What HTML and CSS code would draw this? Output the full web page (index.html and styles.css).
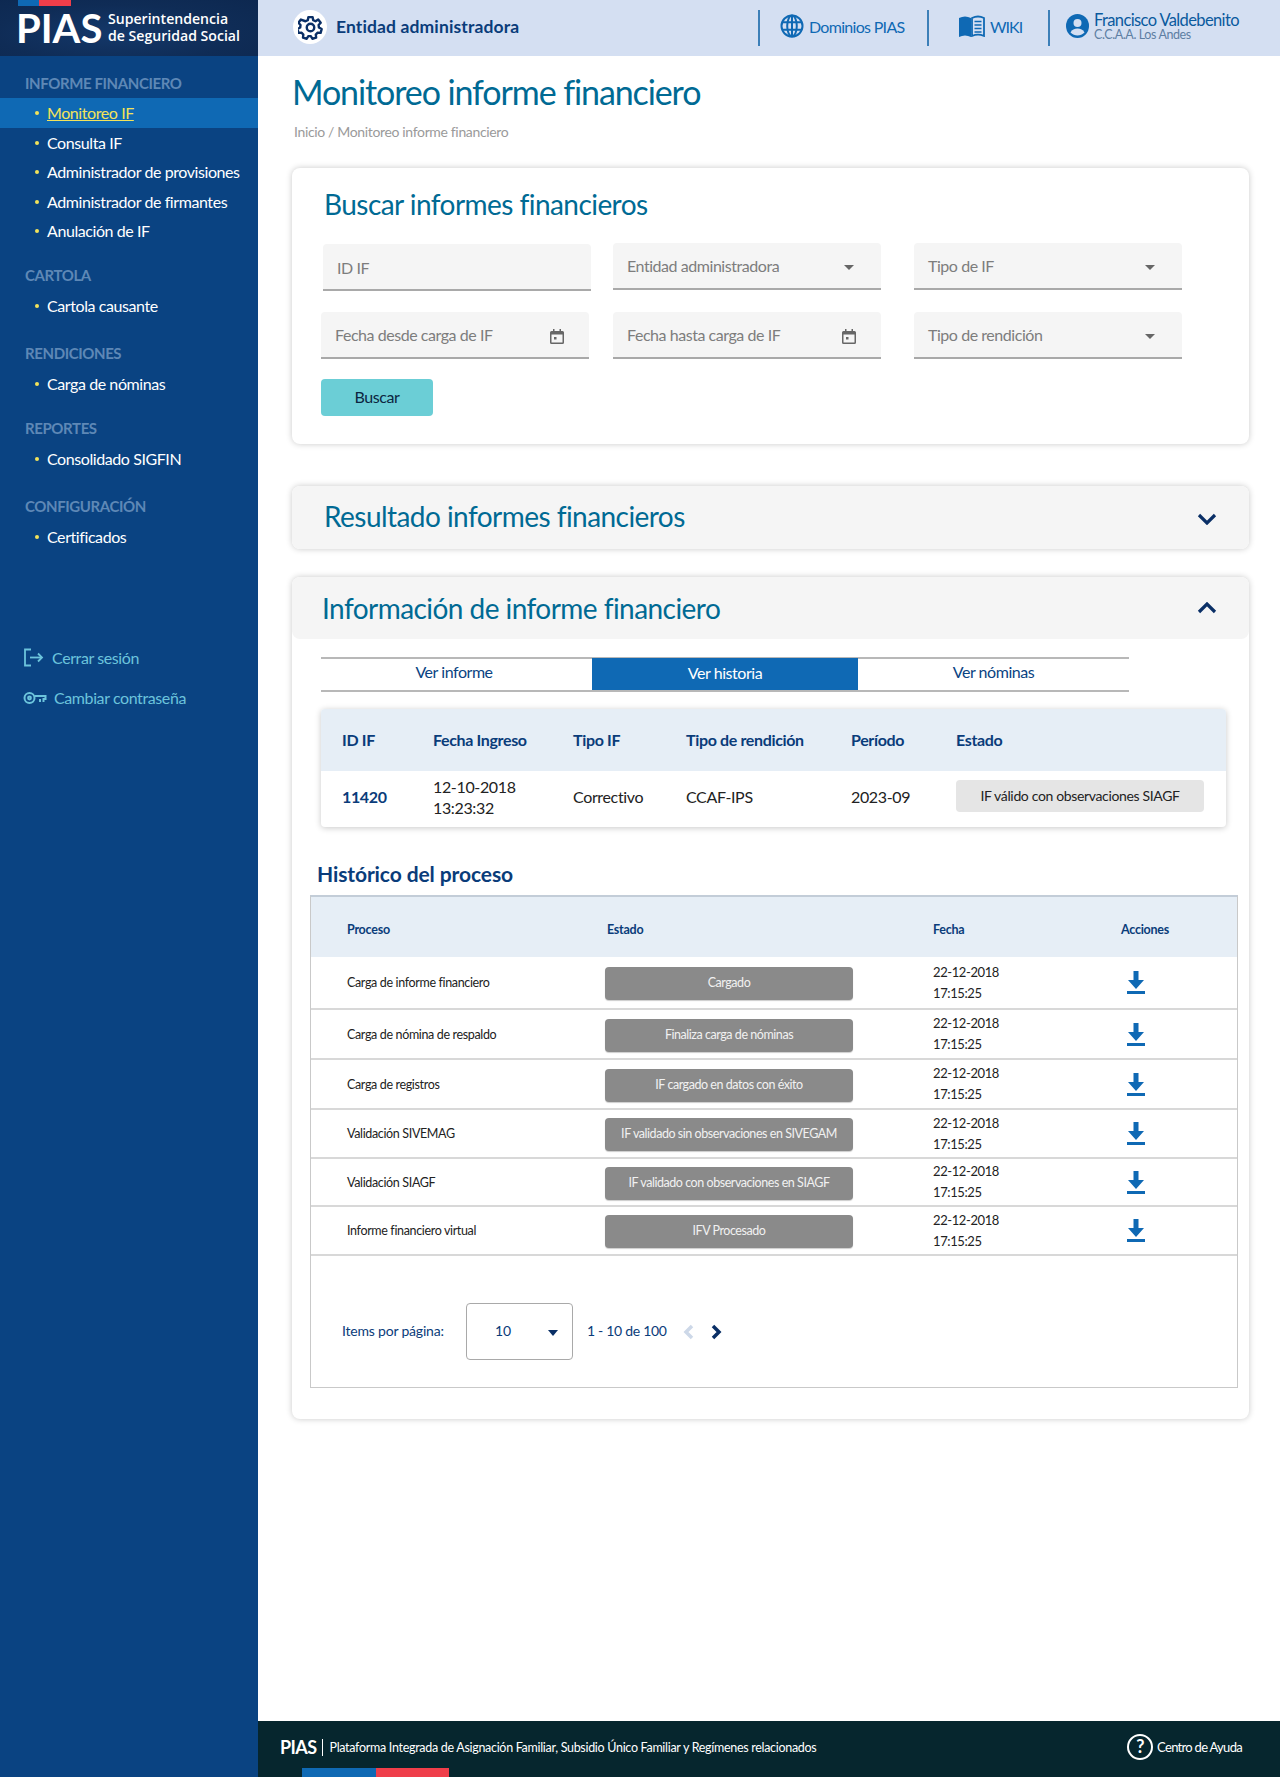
FILE: index.html
```html
<!DOCTYPE html>
<html lang="es">
<head>
    <meta charset="UTF-8">
    <title>Monitoreo informe financiero</title>
    <link rel="stylesheet" href="styles.css">
</head>
<body>
    <div class="app">
        <aside class="sidebar">
            <div class="brand">
                <div class="brand-flag"><span class="flag-blue"></span><span class="flag-red"></span></div>
                <div class="brand-row">
                    <span class="brand-name">PIAS</span>
                    <span class="brand-org">Superintendencia<br>de Seguridad Social</span>
                </div>
            </div>
            <nav class="menu">
                <h3 class="menu-title first">INFORME FINANCIERO</h3>
                <a class="menu-item active">Monitoreo IF</a>
                <a class="menu-item">Consulta IF</a>
                <a class="menu-item">Administrador de provisiones</a>
                <a class="menu-item">Administrador de firmantes</a>
                <a class="menu-item">Anulación de IF</a>
                <h3 class="menu-title tight">CARTOLA</h3>
                <a class="menu-item">Cartola causante</a>
                <h3 class="menu-title">RENDICIONES</h3>
                <a class="menu-item">Carga de nóminas</a>
                <h3 class="menu-title narrow">REPORTES</h3>
                <a class="menu-item">Consolidado SIGFIN</a>
                <h3 class="menu-title">CONFIGURACIÓN</h3>
                <a class="menu-item">Certificados</a>
            </nav>
            <div class="side-links">
                <a class="side-link">
                    <svg width="22" height="19" viewBox="0 0 22 19" fill="none" stroke="#6cc4dc" stroke-width="1.8"><path d="M8 1.500H2v16h6"/><path d="M7 9.500h12"/><path d="M15 5.500l4 4-4 4"/></svg>
                    Cerrar sesión
                </a>
                <a class="side-link">
                    <svg width="24" height="14" viewBox="0 0 24 14" fill="none" stroke="#6cc4dc" stroke-width="2"><circle cx="6.500" cy="7" r="5"/><circle cx="6.500" cy="7" r="1.400"/><path d="M11.500 5h11v3h-2v3M17 8v3"/></svg>
                    Cambiar contraseña
                </a>
            </div>
        </aside>

        <div class="main">
            <header class="topbar">
                <div class="entity">
                    <span class="entity-icon">
                        <svg width="25" height="25" viewBox="0 0 24 24" fill="none" stroke="#0a2f66" stroke-width="2.300"><path d="M10 2h4l.6 3 2.200 1 2.600-1.600 2.400 3-2 2.200.3 2.400 2.600 1.500-1 3.700-3-.2-1.600 1.800.3 3-3.600 1-1.500-2.500h-2.400l-1.500 2.500-3.600-1 .3-3-1.600-1.800-3 .2-1-3.700 2.600-1.500.3-2.400-2-2.200 2.400-3L7.200 6l2.200-1z" stroke-linejoin="round"/><circle cx="12" cy="12" r="3.600"/></svg>
                    </span>
                    <span class="entity-name">Entidad administradora</span>
                </div>
                <div class="top-links">
                    <a class="top-link domains">
                        <svg width="24" height="24" viewBox="0 0 24 24" fill="none" stroke="#0f69b4" stroke-width="2"><circle cx="12" cy="12" r="10.500"/><ellipse cx="12" cy="12" rx="4.800" ry="10.500"/><path d="M2.500 8.300h19M2.500 15.700h19M12 1.500v21"/></svg>
                        Dominios PIAS
                    </a>
                    <a class="top-link wiki">
                        <svg width="26" height="22" viewBox="0 0 26 22"><path fill="#0f69b4" d="M0 3c4-2 8-2 12 0v19c-4-2-8-2-12 0z"/><path fill="none" stroke="#0f69b4" stroke-width="1.800" d="M13 3c4-2 8-2 12 0v18c-4-1.800-8-1.800-12 0z"/><path stroke="#0f69b4" stroke-width="1.500" d="M15.500 6.500h7M15.500 10h7M15.500 13.500h7M15.500 17h7"/></svg>
                        WIKI
                    </a>
                    <div class="top-link user">
                        <svg width="23" height="24" viewBox="0 0 23 24"><ellipse cx="11.500" cy="12" rx="11.500" ry="12" fill="#0f69b4"/><circle cx="11.500" cy="9" r="4" fill="#d4dff2"/><path fill="#d4dff2" d="M4.500 18.500c1.500-3 4-4 7-4s5.500 1 7 4c-2 2-4.500 3-7 3s-5-1-7-3z"/></svg>
                        <span class="user-text">
                            <span class="user-name">Francisco Valdebenito</span>
                            <span class="user-org">C.C.A.A. Los Andes</span>
                        </span>
                    </div>
                </div>
            </header>

            <main class="content">
                <h1 class="page-title">Monitoreo informe financiero</h1>
                <p class="crumbs">Inicio / Monitoreo informe financiero</p>

                <section class="card search">
                    <h2 class="card-title">Buscar informes financieros</h2>
                    <div class="form-grid">
                        <div class="field field-id">ID IF</div>
                        <div class="field">Entidad administradora<span class="caret"></span></div>
                        <div class="field">Tipo de IF<span class="caret"></span></div>
                        <div class="field">Fecha desde carga de IF
                            <svg class="cal" width="14" height="15" viewBox="0 0 14 15"><path fill="#666" d="M3 0h1.500v2h5V0H11v2h1.500A1.500 1.500 0 0 1 14 3.500v10a1.500 1.500 0 0 1-1.500 1.500h-11A1.500 1.500 0 0 1 0 13.500v-10A1.500 1.500 0 0 1 1.500 2H3zM1.500 5.500v8h11v-8zM4 8h2.500v2.500H4z"/></svg>
                        </div>
                        <div class="field">Fecha hasta carga de IF
                            <svg class="cal" width="14" height="15" viewBox="0 0 14 15"><path fill="#666" d="M3 0h1.500v2h5V0H11v2h1.500A1.500 1.500 0 0 1 14 3.500v10a1.500 1.500 0 0 1-1.500 1.500h-11A1.500 1.500 0 0 1 0 13.500v-10A1.500 1.500 0 0 1 1.500 2H3zM1.500 5.500v8h11v-8zM4 8h2.500v2.500H4z"/></svg>
                        </div>
                        <div class="field">Tipo de rendición<span class="caret"></span></div>
                    </div>
                    <button class="btn-search">Buscar</button>
                </section>

                <section class="card collapsed">
                    <div class="card-head">
                        <h2 class="card-title">Resultado informes financieros</h2>
                        <svg class="chev" width="20" height="12" viewBox="0 0 20 12" fill="none" stroke="#0a2f66" stroke-width="3.200"><path d="M2 2l8 8 8-8"/></svg>
                    </div>
                </section>

                <section class="card detail">
                    <div class="card-head">
                        <h2 class="card-title">Información de informe financiero</h2>
                        <svg width="20" height="12" viewBox="0 0 20 12" fill="none" stroke="#0a2f66" stroke-width="3.200"><path d="M2 10l8-8 8 8"/></svg>
                    </div>
                    <div class="detail-body">
                        <div class="tabs">
                            <a class="tab tab-first">Ver informe</a>
                            <a class="tab current">Ver historia</a>
                            <a class="tab">Ver nóminas</a>
                        </div>

                        <div class="summary">
                            <div class="summary-row summary-head">
                                <span>ID IF</span>
                                <span>Fecha Ingreso</span>
                                <span>Tipo IF</span>
                                <span>Tipo de rendición</span>
                                <span>Período</span>
                                <span>Estado</span>
                            </div>
                            <div class="summary-row summary-data">
                                <span class="summary-id">11420</span>
                                <span class="summary-date">12-10-2018<br>13:23:32</span>
                                <span>Correctivo</span>
                                <span>CCAF-IPS</span>
                                <span>2023-09</span>
                                <span class="summary-pill">IF válido con observaciones SIAGF</span>
                            </div>
                        </div>

                        <h3 class="hist-title">Histórico del proceso</h3>
                        <div class="hist">
                            <div class="hist-row hist-head">
                                <span>Proceso</span><span>Estado</span><span>Fecha</span><span>Acciones</span>
                            </div>
                            <div class="hist-row h53">
                                <span>Carga de informe financiero</span>
                                <span class="badge">Cargado</span>
                                <span class="when">22-12-2018<br>17:15:25</span>
                                <svg class="dl" width="20" height="23" viewBox="0 0 20 23"><path fill="#0f69b4" d="M7.500 0h5v9H18l-8 9-8-9h5.500z"/><path fill="#0f69b4" d="M1 20h18v3H1z"/></svg>
                            </div>
                            <div class="hist-row h50">
                                <span>Carga de nómina de respaldo</span>
                                <span class="badge">Finaliza carga de nóminas</span>
                                <span class="when">22-12-2018<br>17:15:25</span>
                                <svg class="dl" width="20" height="23" viewBox="0 0 20 23"><path fill="#0f69b4" d="M7.500 0h5v9H18l-8 9-8-9h5.500z"/><path fill="#0f69b4" d="M1 20h18v3H1z"/></svg>
                            </div>
                            <div class="hist-row h50">
                                <span>Carga de registros</span>
                                <span class="badge">IF cargado en datos con éxito</span>
                                <span class="when">22-12-2018<br>17:15:25</span>
                                <svg class="dl" width="20" height="23" viewBox="0 0 20 23"><path fill="#0f69b4" d="M7.500 0h5v9H18l-8 9-8-9h5.500z"/><path fill="#0f69b4" d="M1 20h18v3H1z"/></svg>
                            </div>
                            <div class="hist-row h49">
                                <span>Validación SIVEMAG</span>
                                <span class="badge">IF validado sin observaciones en SIVEGAM</span>
                                <span class="when">22-12-2018<br>17:15:25</span>
                                <svg class="dl" width="20" height="23" viewBox="0 0 20 23"><path fill="#0f69b4" d="M7.500 0h5v9H18l-8 9-8-9h5.500z"/><path fill="#0f69b4" d="M1 20h18v3H1z"/></svg>
                            </div>
                            <div class="hist-row h48">
                                <span>Validación SIAGF</span>
                                <span class="badge">IF validado con observaciones en SIAGF</span>
                                <span class="when">22-12-2018<br>17:15:25</span>
                                <svg class="dl" width="20" height="23" viewBox="0 0 20 23"><path fill="#0f69b4" d="M7.500 0h5v9H18l-8 9-8-9h5.500z"/><path fill="#0f69b4" d="M1 20h18v3H1z"/></svg>
                            </div>
                            <div class="hist-row h49">
                                <span>Informe financiero virtual</span>
                                <span class="badge">IFV Procesado</span>
                                <span class="when">22-12-2018<br>17:15:25</span>
                                <svg class="dl" width="20" height="23" viewBox="0 0 20 23"><path fill="#0f69b4" d="M7.500 0h5v9H18l-8 9-8-9h5.500z"/><path fill="#0f69b4" d="M1 20h18v3H1z"/></svg>
                            </div>
                            <div class="pager">
                                <span class="pager-label">Items por página:</span>
                                <div class="pager-select">10<span class="pager-caret"></span></div>
                                <span class="pager-range">1 - 10 de 100</span>
                                <svg class="pager-prev" width="11" height="16" viewBox="0 0 11 16" fill="none" stroke="#cdd8e8" stroke-width="3.500"><path d="M9 2L3 8l6 6"/></svg>
                                <svg class="pager-next" width="11" height="16" viewBox="0 0 11 16" fill="none" stroke="#0a2f66" stroke-width="3.500"><path d="M2 2l6 6-6 6"/></svg>
                            </div>
                        </div>
                    </div>
                </section>
            </main>

            <footer class="footer">
                <div class="footer-left">
                    <span class="footer-name">PIAS</span>
                    <span class="footer-text">Plataforma Integrada de Asignación Familiar, Subsidio Único Familiar y Regímenes relacionados</span>
                </div>
                <div class="footer-help">
                    <span class="help-icon">?</span>
                    Centro de Ayuda
                </div>
                <div class="footer-flag"><span class="flag-blue"></span><span class="flag-red"></span></div>
            </footer>
        </div>
    </div>
</body>
</html>
```

FILE: styles.css
```css
* {
    box-sizing: border-box;
}

body {
    margin: 0;
    font-family: Lato, "Open Sans", sans-serif;
    background-color: #fff;
    color: #222;
}

h1, h2, h3, p {
    margin: 0;
    font-weight: normal;
}

.app {
    display: grid;
    grid-template-columns: 258px 1fr;
    min-height: 1777px;
}

/* sidebar */
.sidebar {
    background-color: #0a4382;
    color: #fff;
}

.brand {
    height: 56px;
    padding-left: 18px;
    background: radial-gradient(ellipse at 45% 60%, #14386a 0%, #0f2c56 60%, #0d2850 100%);
}

.brand-flag {
    display: flex;
    width: 53px;
    height: 6px;
}

.flag-blue {
    flex: 21;
    background-color: #0f69b4;
}

.flag-red {
    flex: 32;
    background-color: #ef3e4a;
}

.brand-row {
    display: flex;
    align-items: center;
    gap: 8px;
    margin-left: -2px;
    margin-top: 2px;
}

.brand-name {
    font-size: 40px;
    line-height: 40px;
    font-weight: 700;
    width: 84px;
}

.brand-org {
    font-family: "Open Sans", sans-serif;
    font-size: 14.100px;
    line-height: 16.500px;
    font-weight: 600;
    margin-top: -1px;
}

.menu {
    padding-top: 18px;
}

.menu-title {
    font-size: 15px;
    font-weight: 700;
    line-height: 18px;
    padding-left: 25px;
    letter-spacing: -0.4px;
    color: #5e88b6;
    margin-top: 24px;
    margin-bottom: 7px;
}

.menu-title.first {
    margin-top: 0;
    margin-bottom: 6px;
}

.menu-title.tight {
    margin-top: 20px;
}

.menu-title.narrow {
    margin-top: 20px;
}

.menu-item {
    display: block;
    position: relative;
    height: 29.500px;
    line-height: 29.500px;
    padding-left: 47px;
    font-size: 16px;
    letter-spacing: -0.42px;
}

.menu-item::before {
    content: '';
    position: absolute;
    left: 35px;
    top: 13px;
    width: 4px;
    height: 4px;
    border-radius: 50%;
    background-color: #f3e35a;
}

.menu-item.active {
    background-color: #0f69b4;
    color: #f3e35a;
    text-decoration: underline;
}

.side-links {
    margin-top: 86px;
    padding-left: 23px;
}

.side-link {
    display: flex;
    align-items: center;
    gap: 7px;
    height: 40px;
    font-size: 16px;
    letter-spacing: -0.4px;
    color: #6cc4dc;
}

/* header */
.main {
    display: flex;
    flex-direction: column;
    min-width: 0;
}

.topbar {
    height: 56px;
    flex-shrink: 0;
    background-color: #d4dff2;
    display: flex;
    justify-content: space-between;
    align-items: center;
    padding-left: 35px;
}

.entity {
    display: flex;
    align-items: center;
    gap: 9px;
    padding-bottom: 2px;
}

.entity-icon {
    width: 34px;
    height: 34px;
    border-radius: 50%;
    background-color: #fff;
    display: flex;
    align-items: center;
    justify-content: center;
}

.entity-name {
    font-size: 17.500px;
    font-weight: 700;
    letter-spacing: 0.12px;
    color: #0a3c7a;
    margin-bottom: 2px;
}

.top-links {
    display: flex;
    height: 100%;
    padding-top: 10px;
    padding-bottom: 1px;
}

.top-link {
    display: flex;
    align-items: center;
    border-left: 2px solid #3c7fb8;
    height: 36px;
    padding-bottom: 4px;
    font-size: 16px;
    letter-spacing: -0.7px;
    color: #0f69b4;
}

.domains {
    width: 169px;
    padding-left: 20px;
    gap: 5px;
}

.wiki {
    width: 121px;
    padding-left: 30px;
    gap: 5px;
    letter-spacing: -1px;
}

.user {
    width: 232px;
    padding-left: 16px;
    gap: 5px;
}

.user-text {
    display: flex;
    flex-direction: column;
}

.user-name {
    font-size: 16.500px;
    line-height: 16px;
    letter-spacing: -0.62px;
    color: #0a5a9e;
}

.user-org {
    font-size: 12.500px;
    line-height: 13px;
    letter-spacing: -0.4px;
    color: #5d7ea3;
}

/* content */
.content {
    flex: 1;
    padding: 15px 31px 0 34px;
}

.page-title {
    font-size: 34px;
    line-height: 42px;
    letter-spacing: -1.100px;
    color: #006a94;
}

.crumbs {
    font-size: 14px;
    line-height: 18px;
    margin-top: 10px;
    margin-left: 2px;
    letter-spacing: -0.35px;
    color: #9a9a9a;
}

.card {
    background-color: #fff;
    border-radius: 8px;
    box-shadow: 0 0 6px rgba(0,0,0,0.22);
}

.card-title {
    font-size: 28px;
    line-height: 34px;
    letter-spacing: -0.55px;
    color: #006a94;
}

.search {
    margin-top: 27px;
    height: 276px;
    padding: 19px 29px 0 29px;
}

.search .card-title {
    margin-left: 3px;
}

.form-grid {
    display: grid;
    grid-template-columns: 268px 268px 277px;
    column-gap: 24px;
    row-gap: 22px;
    margin-top: 22px;
}

.form-grid .field:nth-child(3n) {
    margin-left: 9px;
}

.field {
    height: 47px;
    background-color: #f5f5f5;
    border-bottom: 2px solid #a9a9a9;
    border-radius: 4px 4px 0 0;
    display: flex;
    align-items: center;
    justify-content: space-between;
    padding: 0 27px 0 14px;
    font-size: 16px;
    letter-spacing: -0.45px;
    color: #7d7d7d;
}

.field-id {
    margin: 1px -2px -1px 2px;
    padding-top: 2px;
}

.caret {
    border-left: 5px solid transparent;
    border-right: 5px solid transparent;
    border-top: 5px solid #666;
    margin-top: 3px;
}

.cal {
    margin-top: 3px;
    margin-right: -2px;
}

.btn-search {
    display: block;
    margin-top: 20px;
    width: 112px;
    height: 37px;
    padding-bottom: 3px;
    border: none;
    border-radius: 4px;
    background-color: #6bced6;
    font-family: Lato, sans-serif;
    font-size: 16px;
    letter-spacing: -0.4px;
    color: #0c2540;
}

.card-head {
    background-color: #f5f5f5;
    border-radius: 8px;
    display: flex;
    justify-content: space-between;
    align-items: center;
    padding: 0 32px;
}

.collapsed {
    margin-top: 42px;
}

.collapsed .card-head {
    height: 63px;
}

.collapsed .card-title {
    margin-bottom: 3px;
}

.chev {
    margin-top: 2px;
}

.detail {
    margin-top: 28px;
    height: 842px;
}

.detail .card-head {
    height: 62px;
    padding-left: 30px;
}

.detail-body {
    padding: 18px 11px 0 18px;
}

/* tabs */
.tabs {
    display: flex;
    width: 808px;
    margin-left: 11px;
    height: 35px;
    border-top: 2px solid #b8b8b8;
    border-bottom: 2px solid #b8b8b8;
}

.tab {
    flex: 0 0 271px;
    text-align: center;
    font-size: 16px;
    line-height: 26px;
    letter-spacing: -0.45px;
    color: #0a4382;
}

.tab-first {
    padding-right: 5px;
}

.tab.current {
    flex: 0 0 266px;
    background-color: #0f69b4;
    color: #fff;
    margin-top: -1px;
    line-height: 29px;
}

/* summary */
.summary {
    width: 905px;
    margin-left: 11px;
    margin-top: 17px;
    border-radius: 4px;
    box-shadow: 0 1px 6px rgba(0,0,0,0.22);
}

.summary-row {
    display: grid;
    grid-template-columns: 91px 140px 113px 165px 105px 1fr;
    align-items: center;
    padding-left: 21px;
}

.summary-head {
    height: 62px;
    padding-bottom: 2px;
    background-color: #e6eef6;
    border-radius: 4px 4px 0 0;
    font-size: 16px;
    font-weight: 700;
    letter-spacing: -0.35px;
    color: #0a3c7a;
}

.summary-data {
    height: 56px;
    padding-bottom: 5px;
    font-size: 16px;
    letter-spacing: -0.35px;
    color: #222;
}

.summary-id {
    font-weight: 700;
    color: #0a3c7a;
}

.summary-date {
    line-height: 21px;
}

.summary-pill {
    width: 248px;
    height: 32px;
    margin-top: -2px;
    border-radius: 4px;
    background-color: #e5e5e5;
    font-size: 14px;
    letter-spacing: -0.35px;
    line-height: 32px;
    text-align: center;
}

/* historic table */
.hist-title {
    margin-left: 7px;
    margin-top: 34px;
    font-size: 21px;
    line-height: 26px;
    font-weight: 700;
    letter-spacing: -0.1px;
    color: #0a3c7a;
}

.hist {
    margin-top: 8px;
    border: 1px solid #c9c9c9;
    border-top: 2px solid #c3cdd8;
    width: 928px;
    height: 493px;
}

.hist-row {
    display: grid;
    grid-template-columns: 260px 326px 188px 1fr;
    align-items: center;
    padding-left: 36px;
    border-bottom: 2px solid #d8d8d8;
    font-size: 12.500px;
    letter-spacing: -0.35px;
    color: #222;
}

.hist-head {
    height: 60px;
    padding-top: 4px;
    border-bottom: none;
    background-color: #e6eef6;
    font-weight: 700;
    letter-spacing: -0.25px;
    color: #0a3c7a;
}

.h53 { height: 53px; }
.h50 { height: 50px; }
.h49 { height: 49px; }
.h48 { height: 48px; }

.badge {
    width: 248px;
    height: 33px;
    margin-left: -2px;
    margin-top: 2px;
    border-radius: 4px;
    background-color: #8a8a8a;
    box-shadow: 0 1px 1px rgba(0,0,0,0.2);
    line-height: 32px;
    letter-spacing: -0.45px;
    text-align: center;
    color: #f1f1f1;
}

.when {
    font-size: 13px;
    line-height: 21px;
    letter-spacing: -0.4px;
}

.dl {
    margin-left: 5px;
}

/* pager */
.pager {
    display: flex;
    align-items: center;
    margin-top: 47px;
    padding-left: 31px;
    font-size: 14px;
    letter-spacing: -0.2px;
    color: #0a3c7a;
}

.pager-label {
    width: 124px;
    margin-bottom: 2px;
}

.pager-select {
    width: 107px;
    height: 57px;
    border: 1px solid #a9a9a9;
    border-radius: 4px;
    display: flex;
    align-items: center;
    justify-content: space-between;
    padding: 0 14px 2px 28px;
}

.pager-caret {
    border-left: 5.500px solid transparent;
    border-right: 5.500px solid transparent;
    border-top: 6px solid #0a2f66;
    margin-top: 5px;
}

.pager-range {
    margin-left: 14px;
    width: 96px;
    margin-bottom: 2px;
    letter-spacing: -0.3px;
}

.pager-prev {
    margin-right: 17px;
}

/* footer */
.footer {
    height: 56px;
    flex-shrink: 0;
    background-color: #06262e;
    color: #fff;
    display: flex;
    justify-content: space-between;
    align-items: flex-start;
    padding: 13px 38px 0 23px;
    position: relative;
}

.footer-left {
    display: flex;
    align-items: center;
    margin-top: 5px;
    margin-left: -1px;
}

.footer-name {
    font-size: 18px;
    font-weight: 700;
    letter-spacing: -0.6px;
    padding-right: 6px;
    border-right: 1px solid #fff;
    line-height: 17px;
}

.footer-text {
    font-size: 12.500px;
    letter-spacing: -0.3px;
    margin-left: 6px;
}

.footer-help {
    display: flex;
    align-items: center;
    gap: 4px;
    font-size: 13px;
    letter-spacing: -0.7px;
}

.help-icon {
    width: 26px;
    height: 26px;
    border: 2.500px solid #fff;
    border-radius: 50%;
    text-align: center;
    font-size: 18px;
    font-weight: 700;
    line-height: 21px;
}

.footer-flag {
    position: absolute;
    left: 44px;
    bottom: 0;
    width: 147px;
    height: 9px;
    display: flex;
}

.footer-flag .flag-blue {
    flex: 74;
}

.footer-flag .flag-red {
    flex: 73;
}
```
